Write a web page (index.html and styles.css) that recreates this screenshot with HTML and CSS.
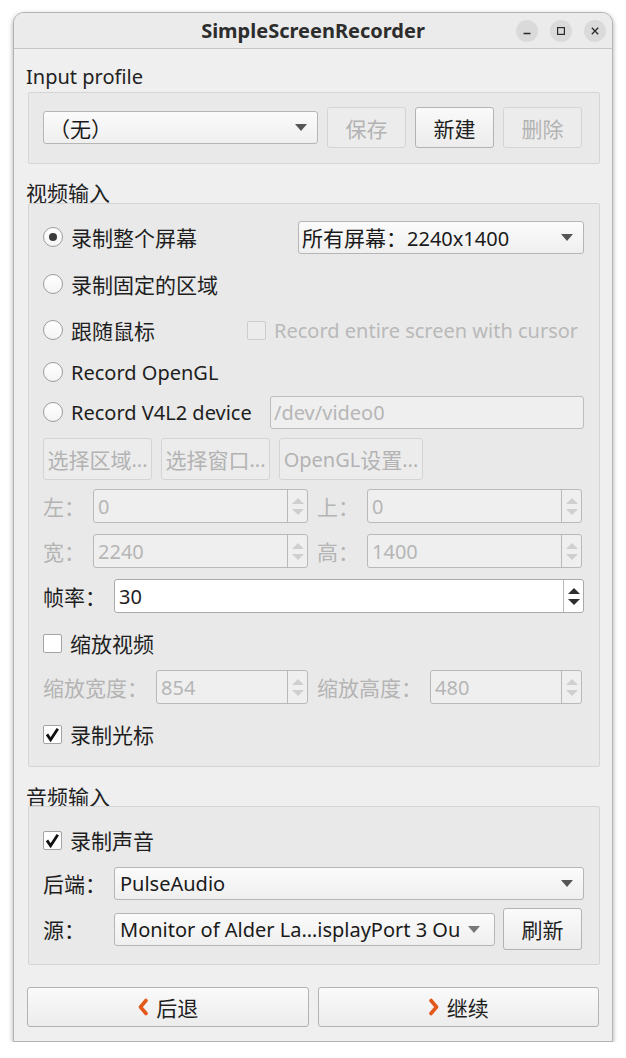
FILE: index.html
```html
<!DOCTYPE html>
<html>
<head>
<meta charset="utf-8">
<title>SimpleScreenRecorder</title>
<link rel="stylesheet" href="styles.css">
</head>
<body>
<div class="window">
  <div class="titlebar">
    <div></div>
    <div class="title">SimpleScreenRecorder</div>
    <div class="wm">
      <span class="wm-btn"><svg width="22" height="22" viewBox="0 0 22 22"><path d="M7.5 13.5h7" stroke="#2b2b2b" stroke-width="1.4" fill="none"/></svg></span>
      <span class="wm-btn"><svg width="22" height="22" viewBox="0 0 22 22"><rect x="7.6" y="7.6" width="6.8" height="6.8" stroke="#2b2b2b" stroke-width="1.2" fill="none"/></svg></span>
      <span class="wm-btn"><svg width="22" height="22" viewBox="0 0 22 22"><path d="M7.8 7.8L14.2 14.2M14.2 7.8L7.8 14.2" stroke="#2b2b2b" stroke-width="1.3" fill="none"/></svg></span>
    </div>
  </div>

  <div class="content">
    <div class="section-label first">Input profile</div>
    <div class="group g-profile">
      <div class="combo w275"><span class="ctext zh">（无）</span><span class="arrow"></span></div>
      <div class="btn w79 disabled"><span class="zh">保存</span></div>
      <div class="btn w79"><span class="zh">新建</span></div>
      <div class="btn w79 disabled"><span class="zh">删除</span></div>
    </div>

    <div class="section-label cjk-label"><span class="zh">视频输入</span></div>
    <div class="group g-video">
      <div class="row">
        <div class="opt"><span class="radio on"></span><span class="zh">录制整个屏幕</span></div>
        <div class="combo w286 push"><span class="ctext"><span class="zh">所有屏幕：</span>2240x1400</span><span class="arrow"></span></div>
      </div>
      <div class="row m13">
        <div class="opt"><span class="radio"></span><span class="zh">录制固定的区域</span></div>
      </div>
      <div class="row m12">
        <div class="opt"><span class="radio"></span><span class="zh">跟随鼠标</span></div>
        <div class="opt dis push w337"><span class="check dis-box"></span>Record entire screen with cursor</div>
      </div>
      <div class="row m8">
        <div class="opt"><span class="radio"></span>Record OpenGL</div>
      </div>
      <div class="row m6">
        <div class="opt"><span class="radio"></span>Record V4L2 device</div>
        <div class="field push w314">/dev/video0</div>
      </div>
      <div class="row tall m9 btnrow">
        <div class="btn w109 disabled"><span class="zh">选择区域</span>...</div>
        <div class="btn w109 disabled"><span class="zh">选择窗口</span>...</div>
        <div class="btn w144 disabled">OpenGL<span class="zh">设置</span>...</div>
      </div>
      <div class="row m9 grid-lt">
        <div class="lbl dis"><span class="zh">左：</span></div>
        <div class="spin dis"><span class="sval">0</span><span class="sbtns"><span class="up"></span><span class="dn"></span></span></div>
        <div class="lbl dis pl"><span class="zh">上：</span></div>
        <div class="spin dis"><span class="sval">0</span><span class="sbtns"><span class="up"></span><span class="dn"></span></span></div>
      </div>
      <div class="row m11 grid-lt">
        <div class="lbl dis"><span class="zh">宽：</span></div>
        <div class="spin dis"><span class="sval">2240</span><span class="sbtns"><span class="up"></span><span class="dn"></span></span></div>
        <div class="lbl dis pl"><span class="zh">高：</span></div>
        <div class="spin dis"><span class="sval">1400</span><span class="sbtns"><span class="up"></span><span class="dn"></span></span></div>
      </div>
      <div class="row m11 grid-fr">
        <div class="lbl"><span class="zh">帧率：</span></div>
        <div class="spin"><span class="sval">30</span><span class="sbtns"><span class="up"></span><span class="dn"></span></span></div>
      </div>
      <div class="row m13">
        <div class="opt"><span class="check"></span><span class="zh">缩放视频</span></div>
      </div>
      <div class="row m10 grid-scale">
        <div class="lbl dis"><span class="zh">缩放宽度：</span></div>
        <div class="spin dis"><span class="sval">854</span><span class="sbtns"><span class="up"></span><span class="dn"></span></span></div>
        <div class="lbl dis pl"><span class="zh">缩放高度：</span></div>
        <div class="spin dis"><span class="sval">480</span><span class="sbtns"><span class="up"></span><span class="dn"></span></span></div>
      </div>
      <div class="row m13">
        <div class="opt"><span class="check on"><svg width="19" height="19" viewBox="0 0 19 19"><path d="M4 9.4L7.6 14.8L14.8 3.8" stroke="#111" stroke-width="2.8" fill="none" stroke-linejoin="miter"/></svg></span><span class="zh">录制光标</span></div>
      </div>
    </div>

    <div class="section-label cjk-label last"><span class="zh">音频输入</span></div>
    <div class="group g-audio">
      <div class="row">
        <div class="opt"><span class="check on"><svg width="19" height="19" viewBox="0 0 19 19"><path d="M4 9.4L7.6 14.8L14.8 3.8" stroke="#111" stroke-width="2.8" fill="none" stroke-linejoin="miter"/></svg></span><span class="zh">录制声音</span></div>
      </div>
      <div class="row m9 grid-fr">
        <div class="lbl"><span class="zh">后端：</span></div>
        <div class="combo"><span class="ctext">PulseAudio</span><span class="arrow"></span></div>
      </div>
      <div class="row tall m8 src-row">
        <div class="lbl w71"><span class="zh">源：</span></div>
        <div class="combo w381"><span class="ctext">Monitor of Alder La…isplayPort 3 Ou</span><span class="arrow a14"></span></div>
        <div class="btn w79"><span class="zh">刷新</span></div>
      </div>
    </div>

    <div class="nav">
      <div class="btn navbtn"><svg class="chev" width="12" height="18" viewBox="0 0 12 18"><path d="M9 2.5L3.5 9L9 15.5" stroke="#e3591c" stroke-width="3.6" fill="none" stroke-linecap="round" stroke-linejoin="round"/></svg><span class="zh">后退</span></div>
      <div class="btn navbtn"><svg class="chev" width="12" height="18" viewBox="0 0 12 18"><path d="M3 2.5L8.5 9L3 15.5" stroke="#e3591c" stroke-width="3.6" fill="none" stroke-linecap="round" stroke-linejoin="round"/></svg><span class="zh">继续</span></div>
    </div>
  </div>
</div>
</body>
</html>
```

FILE: styles.css
```css
* { box-sizing: border-box; }

body {
  margin: 0;
  background: #ffffff;
  font-family: "Noto Sans", "Noto Sans CJK SC", sans-serif;
  font-size: 20px;
  color: #1e1e1e;
}

.zh {
  font-family: "Noto Sans CJK SC", sans-serif;
  font-size: 21px;
}

.window {
  margin: 12px 0 0 13px;
  width: 600px;
  height: 1030px;
  border: 1px solid #b4b4b4;
  border-radius: 11px 11px 0 0;
  background: #efefef;
  box-shadow: 0 2px 5px rgba(0, 0, 0, 0.35);
  display: flex;
  flex-direction: column;
  overflow: hidden;
}

.titlebar {
  flex: none;
  height: 36px;
  border-bottom: 1px solid #c6c6c6;
  background: #ebebeb;
  display: grid;
  grid-template-columns: 1fr auto 1fr;
  align-items: center;
}

.title {
  font-weight: bold;
  font-size: 20px;
  color: #2d2d2d;
}

.wm {
  justify-self: end;
  display: flex;
  gap: 12px;
  padding-right: 6px;
}

.wm-btn {
  width: 22px;
  height: 22px;
  border-radius: 50%;
  background: #dadada;
  display: block;
}
.wm-btn svg { display: block; }

.content {
  display: flex;
  flex-direction: column;
}

.section-label {
  height: 24px;
  line-height: 24px;
  margin: 16px 0 -1px 12px;
  color: #222;
  display: flex;
  align-items: center;
}
.section-label.first { margin-top: 16px; margin-bottom: 3px; }
.section-label.last { margin-top: 17px; margin-bottom: -2px; }

.group {
  margin: 0 12px 0 14px;
  border: 1px solid #d5d5d5;
  border-radius: 2px;
  background: #e9e9e9;
}

.g-profile {
  display: flex;
  align-items: center;
  gap: 9px;
  padding: 14px 15px 15px 14px;
}

.g-video {
  padding: 16px 15px 15px 14px;
}

.g-audio {
  padding: 16px 15px 14px 14px;
}

.row {
  height: 34px;
  display: flex;
  align-items: center;
}
.row.tall { height: 42px; }
.m6 { margin-top: 6px; }
.m8 { margin-top: 8px; }
.m9 { margin-top: 9px; }
.m10 { margin-top: 10px; }
.m11 { margin-top: 11px; }
.m12 { margin-top: 12px; }
.m13 { margin-top: 13px; }

.push { margin-left: auto; }

.opt {
  display: flex;
  align-items: center;
  gap: 8px;
  white-space: nowrap;
}
.opt.dis { color: #b9b9b9; gap: 8px; }

.w71 { width: 71px; flex: none; }
.w79 { width: 79px; flex: none; }
.w109 { width: 109px; flex: none; }
.w144 { width: 144px; flex: none; }
.w275 { width: 275px; flex: none; }
.w286 { width: 286px; flex: none; }
.w314 { width: 314px; flex: none; }
.w337 { width: 337px; flex: none; }
.w381 { width: 381px; flex: none; }

.radio {
  width: 20px;
  height: 20px;
  border-radius: 50%;
  border: 1px solid #9c9c9c;
  background: linear-gradient(#ffffff, #f4f4f4);
  display: flex;
  align-items: center;
  justify-content: center;
  flex: none;
}
.radio.on::after {
  content: "";
  width: 8px;
  height: 8px;
  border-radius: 50%;
  background: #3c3c3c;
}

.check {
  width: 19px;
  height: 19px;
  border: 1px solid #a4a4a4;
  border-radius: 2px;
  background: #ffffff;
  flex: none;
  display: block;
}
.check svg { display: block; margin: -1px 0 0 -1px; }
.check.dis-box { border-color: #cdcdcd; background: #ececec; }

.combo {
  height: 33px;
  border: 1px solid #b6b6b6;
  border-radius: 3px;
  background: linear-gradient(#fbfbfb, #efefef);
  display: flex;
  align-items: center;
  padding-left: 5px;
  flex: 1;
  min-width: 0;
  color: #1a1a1a;
}
.combo.w275, .combo.w286, .combo.w381 { flex: none; }
.ctext { white-space: nowrap; overflow: hidden; }
.w286 .ctext { margin-left: -2px; }
.arrow {
  margin-left: auto;
  margin-right: 10px;
  width: 0;
  height: 0;
  border-left: 6px solid transparent;
  border-right: 6px solid transparent;
  border-top: 7px solid #555;
  flex: none;
}
.arrow.a14 { margin-left: 8px; margin-right: 12px; border-top-color: #777; }

.btn {
  height: 41px;
  border: 1px solid #b3b3b3;
  border-radius: 3px;
  background: linear-gradient(#fafafa, #ececec);
  display: flex;
  align-items: center;
  justify-content: center;
  white-space: nowrap;
  color: #1e1e1e;
}
.btn.disabled {
  border-color: #d4d4d4;
  background: #ececec;
  color: #b3b3b3;
}
.btnrow { gap: 9px; }
.btnrow .btn { height: 42px; }

.field {
  height: 33px;
  border: 1px solid #bdbdbd;
  border-radius: 3px;
  background: #efefef;
  color: #b6b6b6;
  display: flex;
  align-items: center;
  padding-left: 3px;
}

.lbl { white-space: nowrap; display: flex; align-items: center; }
.lbl.dis { color: #b4b4b4; }
.lbl.pl { padding-left: 9px; }

.grid-lt { display: grid; grid-template-columns: 50px 215px 59px 215px; }
.grid-fr { display: grid; grid-template-columns: 71px 1fr; }
.grid-scale { display: grid; grid-template-columns: 113px 152px 122px 152px; }

.spin {
  height: 34px;
  border: 1px solid #a9a9a9;
  border-radius: 3px;
  background: #ffffff;
  display: flex;
  align-items: stretch;
}
.spin.dis {
  border-color: #b9b9b9;
  background: #efefef;
  color: #b6b6b6;
}
.sval {
  flex: 1;
  display: flex;
  align-items: center;
  padding-left: 4px;
}
.sbtns {
  width: 20px;
  border-left: 1px solid #b9b9b9;
  display: flex;
  flex-direction: column;
  align-items: center;
  justify-content: center;
  gap: 5px;
}
.up, .dn {
  width: 0;
  height: 0;
  border-left: 6px solid transparent;
  border-right: 6px solid transparent;
}
.up { border-bottom: 6px solid #2e2e2e; }
.dn { border-top: 6px solid #2e2e2e; }
.spin.dis .up { border-bottom-color: #cfcfcf; }
.spin.dis .dn { border-top-color: #cfcfcf; }

.src-row { gap: 0; }
.src-row .btn { margin-left: 8px; height: 42px; }

.nav {
  margin: 22px 13px 0 13px;
  display: flex;
  gap: 9px;
}
.navbtn {
  flex: 1;
  height: 40px;
  gap: 7px;
}
.chev { display: block; }
```
